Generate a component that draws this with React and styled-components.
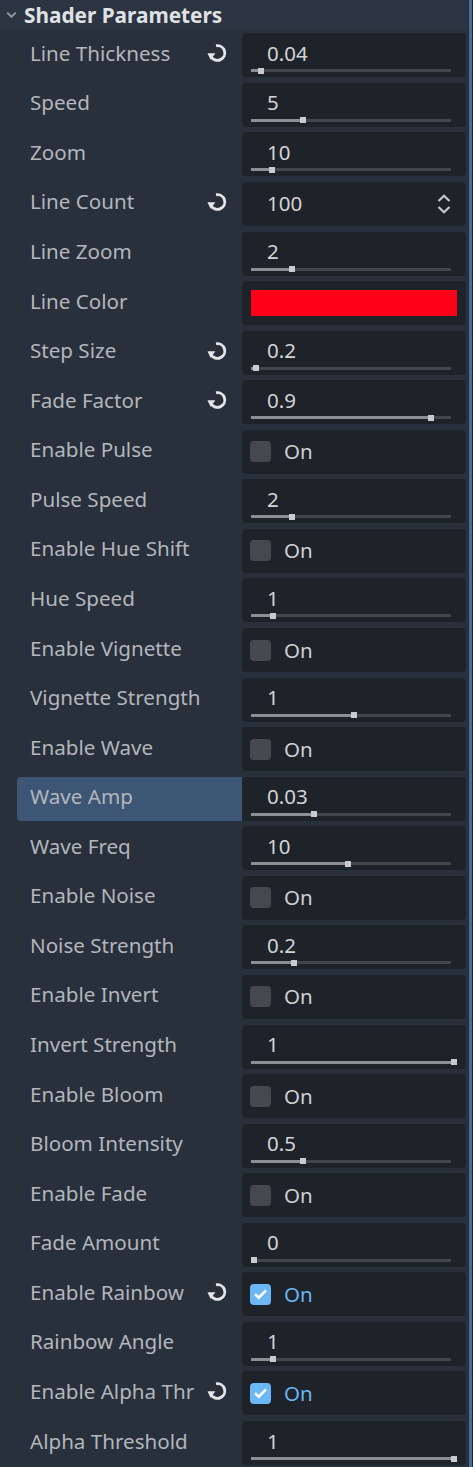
import React from "react";
import styled, { createGlobalStyle } from "styled-components";

const GlobalStyle = createGlobalStyle`
  html, body {
    margin: 0;
    padding: 0;
    background: #28303c;
  }
  body {
    font-family: "Noto Sans", "Open Sans", sans-serif;
  }
`;

const Frame = styled.div`
  width: 473px;
  height: 1467px;
  display: flex;
  overflow: hidden;
  background: #28303c;
`;

const Panel = styled.div`
  width: 469px;
  display: flex;
  flex-direction: column;
`;

const Scroll = styled.div`
  width: 3px;
  background: #4a6b93;
  border-right: 1px solid #1f252d;
`;

const Header = styled.div`
  height: 30px;
  display: flex;
  align-items: center;
  gap: 7px;
  padding-left: 6px;
  background: #2c3441;
  color: #dfe1e4;
  font-weight: 700;
  font-size: 20.8px;
`;

const List = styled.div`
  display: flex;
  flex-direction: column;
  gap: 5.57px;
  padding: 3.3px 3px 0 17px;
`;

const Row = styled.div`
  display: grid;
  grid-template-columns: 225px 224px;
  height: 44px;
`;

const Label = styled.div`
  display: flex;
  align-items: center;
  padding: 0 14px 5px 13px;
  font-size: 20.6px;
  color: #b3b6bb;
  white-space: nowrap;
  overflow: hidden;
  border-radius: 4px 0 0 4px;
  background: ${(p) => (p.$active ? "#3d5675" : "transparent")};
`;

const LabelText = styled.span`
  flex: 1;
  min-width: 0;
  overflow: hidden;
`;

const Field = styled.div`
  background: #1e2229;
  border-radius: 4px;
  display: flex;
  flex-direction: ${(p) => (p.$column ? "column" : "row")};
  align-items: ${(p) => (p.$column ? "stretch" : "center")};
  padding: ${(p) => p.$pad || "0 14px 0 8px"};
  font-size: 20.5px;
  color: #d2d4d7;
`;

const Value = styled.div`
  line-height: 26px;
  margin-top: 6.5px;
  padding-left: 16px;
`;

const SpinValue = styled.div`
  flex: 1;
  padding-left: 17px;
  padding-bottom: 1px;
`;

const Track = styled.div`
  position: relative;
  height: 3px;
  margin-top: 3.5px;
  background: #42464d;
  border-radius: 1px;
`;

const Fill = styled.div`
  height: 100%;
  background: #8c8f95;
`;

const Grabber = styled.div`
  position: absolute;
  top: -1.5px;
  width: 6px;
  height: 6px;
  background: #c9cbcf;
`;

const Swatch = styled.div`
  flex: 1;
  height: 26.5px;
  background: #ff0018;
`;

const Box = styled.div`
  width: 21px;
  height: 21px;
  border-radius: 4px;
  background: ${(p) => (p.$checked ? "#6bb8f5" : "#45484f")};
  display: flex;
  align-items: center;
  justify-content: center;
  margin-left: 0;
`;

const OnText = styled.span`
  margin-left: 13px;
  color: ${(p) => (p.$checked ? "#6ab6f3" : "#cfd1d4")};
  padding-bottom: 1px;
`;

const Revert = () => (
  <svg width="21" height="21" viewBox="0 0 20 20">
    <path
      d="M8.6 3.6 A7 7 0 1 1 4 14.2"
      fill="none"
      stroke="#e4e5e7"
      strokeWidth="2.8"
    />
    <path d="M0.4 10.8 L8 10.8 L3.4 16.9 Z" fill="#e4e5e7" />
  </svg>
);

const Chevron = () => (
  <svg width="11" height="8" viewBox="0 0 11 8">
    <path d="M1.2 1.6 L5.5 5.8 L9.8 1.6" fill="none" stroke="#8e939b" strokeWidth="2" />
  </svg>
);

const Spinner = () => (
  <svg width="16" height="22" viewBox="0 0 16 22">
    <path d="M2.5 8 L8 2.8 L13.5 8" fill="none" stroke="#c6c8cb" strokeWidth="2.2" />
    <path d="M2.5 14 L8 19.2 L13.5 14" fill="none" stroke="#c6c8cb" strokeWidth="2.2" />
  </svg>
);

const Check = () => (
  <svg width="15" height="12" viewBox="0 0 15 12">
    <path d="M2 6.2 L5.8 9.6 L13 2.4" fill="none" stroke="#ffffff" strokeWidth="2.6" />
  </svg>
);

const rows = [
  { label: "Line Thickness", type: "slider", value: "0.04", pos: 0.035, revert: true },
  { label: "Speed", type: "slider", value: "5", pos: 0.245 },
  { label: "Zoom", type: "slider", value: "10", pos: 0.09 },
  { label: "Line Count", type: "spin", value: "100", revert: true },
  { label: "Line Zoom", type: "slider", value: "2", pos: 0.19 },
  { label: "Line Color", type: "color" },
  { label: "Step Size", type: "slider", value: "0.2", pos: 0.01, revert: true },
  { label: "Fade Factor", type: "slider", value: "0.9", pos: 0.885, revert: true },
  { label: "Enable Pulse", type: "check" },
  { label: "Pulse Speed", type: "slider", value: "2", pos: 0.19 },
  { label: "Enable Hue Shift", type: "check" },
  { label: "Hue Speed", type: "slider", value: "1", pos: 0.095 },
  { label: "Enable Vignette", type: "check" },
  { label: "Vignette Strength", type: "slider", value: "1", pos: 0.5 },
  { label: "Enable Wave", type: "check" },
  { label: "Wave Amp", type: "slider", value: "0.03", pos: 0.3, active: true },
  { label: "Wave Freq", type: "slider", value: "10", pos: 0.47 },
  { label: "Enable Noise", type: "check" },
  { label: "Noise Strength", type: "slider", value: "0.2", pos: 0.2 },
  { label: "Enable Invert", type: "check" },
  { label: "Invert Strength", type: "slider", value: "1", pos: 1 },
  { label: "Enable Bloom", type: "check" },
  { label: "Bloom Intensity", type: "slider", value: "0.5", pos: 0.245 },
  { label: "Enable Fade", type: "check" },
  { label: "Fade Amount", type: "slider", value: "0", pos: 0 },
  { label: "Enable Rainbow", type: "check", checked: true, revert: true },
  { label: "Rainbow Angle", type: "slider", value: "1", pos: 0.095 },
  { label: "Enable Alpha Thr", type: "check", checked: true, revert: true },
  { label: "Alpha Threshold", type: "slider", value: "1", pos: 1 },
];

const Editor = ({ row }) => {
  if (row.type === "slider") {
    return (
      <Field $column $pad="0 15px 0 9px">
        <Value>{row.value}</Value>
        <Track>
          <Fill style={{ width: `${row.pos * 100}%` }} />
          <Grabber style={{ left: `${row.pos * 200}px` }} />
        </Track>
      </Field>
    );
  }
  if (row.type === "spin") {
    return (
      <Field>
        <SpinValue>{row.value}</SpinValue>
        <Spinner />
      </Field>
    );
  }
  if (row.type === "color") {
    return (
      <Field $pad="0 9px">
        <Swatch />
      </Field>
    );
  }
  return (
    <Field>
      <Box $checked={row.checked}>{row.checked && <Check />}</Box>
      <OnText $checked={row.checked}>On</OnText>
    </Field>
  );
};

export default function App() {
  return (
    <Frame>
      <GlobalStyle />
      <Panel>
        <Header>
          <Chevron />
          Shader Parameters
        </Header>
        <List>
          {rows.map((row) => (
            <Row key={row.label}>
              <Label $active={row.active}>
                <LabelText>{row.label}</LabelText>
                {row.revert && <Revert />}
              </Label>
              <Editor row={row} />
            </Row>
          ))}
        </List>
      </Panel>
      <Scroll />
    </Frame>
  );
}
